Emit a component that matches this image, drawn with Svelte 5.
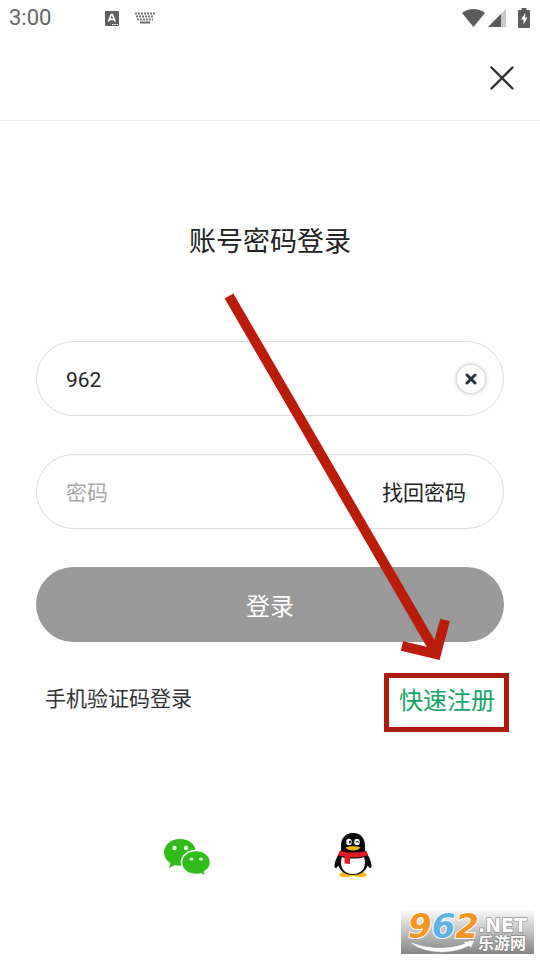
<script lang="ts">
  let account = $state("962");
  let password = $state("");
  const keyRows = [
    { y: 1, shift: 0 },
    { y: 4, shift: 1 },
    { y: 7, shift: 2 },
  ];
</script>

<div class="page">
  <div class="status-bar">
    <span class="clock">3:00</span>
    <div class="status-left">
      <svg width="14" height="15" viewBox="0 0 14 15" aria-hidden="true">
        <rect width="14" height="15" rx="1" fill="#5f5f5f" />
        <path d="M3.5 10.5 6.2 3.5h1.2l2.700 7M4.700 8.300h4.200" fill="none" stroke="#fff" stroke-width="1.700" />
        <path d="M7 13.500h1.400M9.300 13.500h1.400M11.600 13.500h1.400" stroke="#fff" stroke-width="1.200" />
      </svg>
      <svg width="20" height="12" viewBox="0 0 20 12" aria-hidden="true">
        {#each keyRows as row}
          <path
            d="M{row.shift} {row.y + 0.5}H{20 - row.shift}"
            stroke="#777"
            stroke-width="2"
            stroke-dasharray="2 1"
          />
        {/each}
        <path d="M5 10.500h10" stroke="#686868" stroke-width="2" />
      </svg>
    </div>
    <div class="status-right">
      <svg class="wifi" width="23" height="18" viewBox="0 0 23 18" aria-hidden="true">
        <path d="M0 4C6.500-1.300 16.500-1.300 23 4L11.500 18Z" fill="#5c5c5c" />
      </svg>
      <svg class="signal" width="18" height="18" viewBox="0 0 18 18" aria-hidden="true">
        <path d="M0 18 18 0v18Z" fill="#c8c8c8" />
        <path d="M0 18 13 5v13Z" fill="#5c5c5c" />
      </svg>
      <svg width="12" height="20" viewBox="0 0 12 20" aria-hidden="true">
        <path d="M3.500 0h5v2H11q1 0 1 1v16q0 1-1 1H1q-1 0-1-1V3q0-1 1-1h2.500Z" fill="#5c5c5c" />
        <path d="M7.500 4.500 3 11.500h2.500v5L9.500 9.500H7Z" fill="#fff" />
      </svg>
    </div>
  </div>

  <header class="header">
    <button class="close" type="button" aria-label="关闭">
      <svg width="24" height="24" viewBox="0 0 24 24" aria-hidden="true">
        <path d="M1.500 1.500l21 21M22.500 1.500l-21 21" stroke="#303030" stroke-width="2.400" stroke-linecap="round" />
      </svg>
    </button>
  </header>

  <main>
    <h1>账号密码登录</h1>

    <form onsubmit={(e) => e.preventDefault()}>
      <div class="field">
        <input type="text" aria-label="账号" bind:value={account} />
        <button class="clear" type="button" aria-label="清除" onclick={() => (account = "")}>
          <svg width="12" height="12" viewBox="0 0 12 12" aria-hidden="true">
            <path d="M2 2l8 8M10 2l-8 8" stroke="#27313e" stroke-width="3" stroke-linecap="round" />
          </svg>
        </button>
      </div>
      <div class="field">
        <input type="password" aria-label="密码" placeholder="密码" bind:value={password} />
        <a class="forgot" href="#forgot">找回密码</a>
      </div>
      <button class="submit" type="submit">登录</button>

      <div class="links">
        <a class="sms" href="#sms">手机验证码登录</a>
        <a class="register" href="#register">快速注册</a>
      </div>

      <svg class="arrow" width="228" height="370" viewBox="0 0 228 370" aria-hidden="true">
        <path d="M5 3 211 358" stroke="#bb1b09" stroke-width="10" />
        <path d="M178 353l34 8 9-34" fill="none" stroke="#bb1b09" stroke-width="10" />
      </svg>
    </form>

    <div class="social">
      <a href="#wechat" aria-label="微信">
        <svg width="48" height="46" viewBox="0 0 48 46" aria-hidden="true">
          <path
            d="M17 7C7.500 7 1 13 1 20.500c0 4.500 2.500 8 6.500 10.500L6 36l6-3q2.500.7 5 .7C27 33.700 33 28 33 20.500S26.500 7 17 7Z"
            fill="#32bc1b"
          />
          <path
            d="M33 18.500c-8 0-14.500 5-14.500 12S25 42.500 33 42.500q2.300 0 4.500-.6l5.500 2.600-1.500-4.500c3.500-2.300 6-5.500 6-9.500 0-7-6.500-12-14.500-12Z"
            fill="#32bc1b"
            stroke="#fff"
            stroke-width="1.500"
          />
          <g fill="#e9ffe4">
            <circle cx="11.500" cy="16" r="2.200" />
            <circle cx="23" cy="16" r="2.200" />
            <ellipse cx="28.500" cy="27" rx="2" ry="1.600" />
            <ellipse cx="38" cy="27" rx="2" ry="1.600" />
          </g>
        </svg>
      </a>
      <a href="#qq" aria-label="QQ">
        <svg width="48" height="46" viewBox="0 0 48 46" aria-hidden="true">
          <path
            d="M12 41c3-2 7-2 12 0 5-2 9-2 12 0 4 2 1 4-4 4-4 0-6-.5-8-1.500-2 1-4 1.500-8 1.500-5 0-8-2-4-4Z"
            fill="#f9b51c"
          />
          <path
            d="M24 1C15.500 1 12 7 12 14v4c-3 5-6 10-6.500 15-.3 4 1.500 4 4 .5C11.500 40 17 43 24 43s12.500-3 14.500-9.500c2.500 3.500 4.300 3.500 4-.5C42 28 39 23 36 18v-4C36 7 32.500 1 24 1Z"
            fill="#090909"
          />
          <path d="M13 25c3 2 19 2 22 0 3 9-1 17-11 17S10 34 13 25Z" fill="#fff" />
          <ellipse cx="20" cy="10" rx="2.700" ry="3.300" fill="#fff" />
          <ellipse cx="28" cy="10" rx="2.700" ry="3.300" fill="#fff" />
          <ellipse cx="21" cy="10" rx="1" ry="1.600" fill="#111" />
          <path d="M27 10.500q1.500-2 2.500 0" fill="none" stroke="#111" stroke-width="1.200" />
          <path d="M16.500 15.500q7.500-2.500 15 0-2.500 3-7.500 3t-7.500-3Z" fill="#f9b51c" />
          <path d="M10.500 19q13.500 3 27 0l1.500 4.500Q31 26 21 25.300V32l-5.500-.5V24.500Q12 24 9 23.500Z" fill="#e31b24" />
        </svg>
      </a>
    </div>
  </main>

  <svg class="watermark" width="133" height="44" viewBox="0 0 133 44" role="img" aria-label="962.NET 乐游网">
    <defs>
      <linearGradient id="wm-bg" x1="0" y1="0" x2="0" y2="1">
        <stop offset="0" stop-color="#fafafa" />
        <stop offset="1" stop-color="#858585" />
      </linearGradient>
    </defs>
    <rect width="133" height="44" fill="url(#wm-bg)" />
    <path
      d="M7 30.500C22 38.500 46 40 64 33.500l-3-1.500 13-2-4 8-2-2C48 46 20 44 7 30.500Z"
      fill="#fff"
      stroke="#888"
      stroke-width="0.500"
    />
    <text class="digits" x="7" y="28">
      <tspan fill="#f39626">9</tspan><tspan fill="#5cb3e6">6</tspan><tspan fill="#f39626">2</tspan>
    </text>
    <text class="net" x="77" y="22">.NET</text>
    <text class="site" x="77" y="39">乐游网</text>
  </svg>
</div>

<style>
  :global(body) {
    margin: 0;
    background: #fefefe;
  }

  .page {
    position: relative;
    box-sizing: border-box;
    min-height: 100vh;
    overflow: hidden;
    font-family: Roboto, "Noto Sans CJK SC", sans-serif;
    color: #222;
  }

  .status-bar {
    display: flex;
    align-items: center;
    height: 36px;
    padding: 0 10px 0 9px;
    color: #666;
  }
  .clock {
    width: 96px;
    font-size: 22px;
    line-height: 36px;
  }
  .status-left {
    display: flex;
    align-items: center;
    gap: 16px;
    flex: 1;
  }
  .status-right {
    display: flex;
    align-items: center;
  }
  .wifi {
    margin-right: 3px;
  }
  .signal {
    margin-right: 12px;
  }

  .header {
    display: flex;
    align-items: center;
    justify-content: flex-end;
    height: 84px;
    padding: 0 26px;
    border-bottom: 1px solid #ececec;
  }

  button {
    padding: 0;
    border: 0;
    background: none;
    font-family: inherit;
    cursor: pointer;
  }
  a {
    color: inherit;
    text-decoration: none;
  }
  svg {
    display: block;
  }

  main {
    padding: 101px 36px 0;
  }
  h1 {
    margin: 0 0 79px;
    font-size: 27px;
    font-weight: 400;
    line-height: 40px;
    text-align: center;
  }

  form {
    position: relative;
    display: flex;
    flex-direction: column;
    gap: 38px;
  }
  .field {
    display: flex;
    align-items: center;
    box-sizing: border-box;
    height: 75px;
    padding: 0 18px 0 29px;
    border: 1px solid #dcdcdc;
    border-radius: 38px;
  }
  input {
    flex: 1;
    min-width: 0;
    padding: 2px 0 0;
    border: 0;
    outline: 0;
    background: none;
    color: #222;
    font-family: inherit;
    font-size: 21px;
    line-height: 32px;
  }
  input::placeholder {
    color: #a6a6a6;
    opacity: 1;
  }
  .clear {
    display: grid;
    place-items: center;
    width: 28px;
    height: 28px;
    border-radius: 50%;
    background: #fff;
    box-shadow: 0 0 4px rgba(0, 0, 0, 0.35);
  }
  .forgot {
    padding: 2px 19px 0 0;
    font-size: 21px;
    line-height: 32px;
  }
  .submit {
    height: 75px;
    border-radius: 38px;
    background: #999;
    color: #fff;
    font-size: 24px;
  }

  .links {
    display: flex;
    align-items: flex-start;
    justify-content: space-between;
    margin: -7px -5px 0 9px;
  }
  .sms {
    padding-top: 10px;
    font-size: 21px;
    line-height: 32px;
    color: #333;
  }
  .register {
    padding: 5px 9px 8px 10px;
    border: 5px solid #ad1b0e;
    color: #14a568;
    font-size: 24px;
    line-height: 36px;
  }
  .arrow {
    position: absolute;
    top: -48px;
    right: 52px;
    pointer-events: none;
  }

  .social {
    display: flex;
    justify-content: center;
    gap: 118px;
    margin-top: 100px;
  }

  .watermark {
    position: absolute;
    right: 6px;
    bottom: 6px;
    overflow: visible;
  }
  .digits {
    font: italic bold 34px "DejaVu Sans", sans-serif;
    stroke: #fff;
    stroke-width: 2px;
    paint-order: stroke;
  }
  .net,
  .site {
    fill: #fff;
    stroke: #777;
    stroke-width: 1px;
    paint-order: stroke;
  }
  .net {
    font: bold 19px "DejaVu Sans", sans-serif;
  }
  .site {
    font: bold 16px "Noto Sans CJK SC", sans-serif;
  }
</style>
